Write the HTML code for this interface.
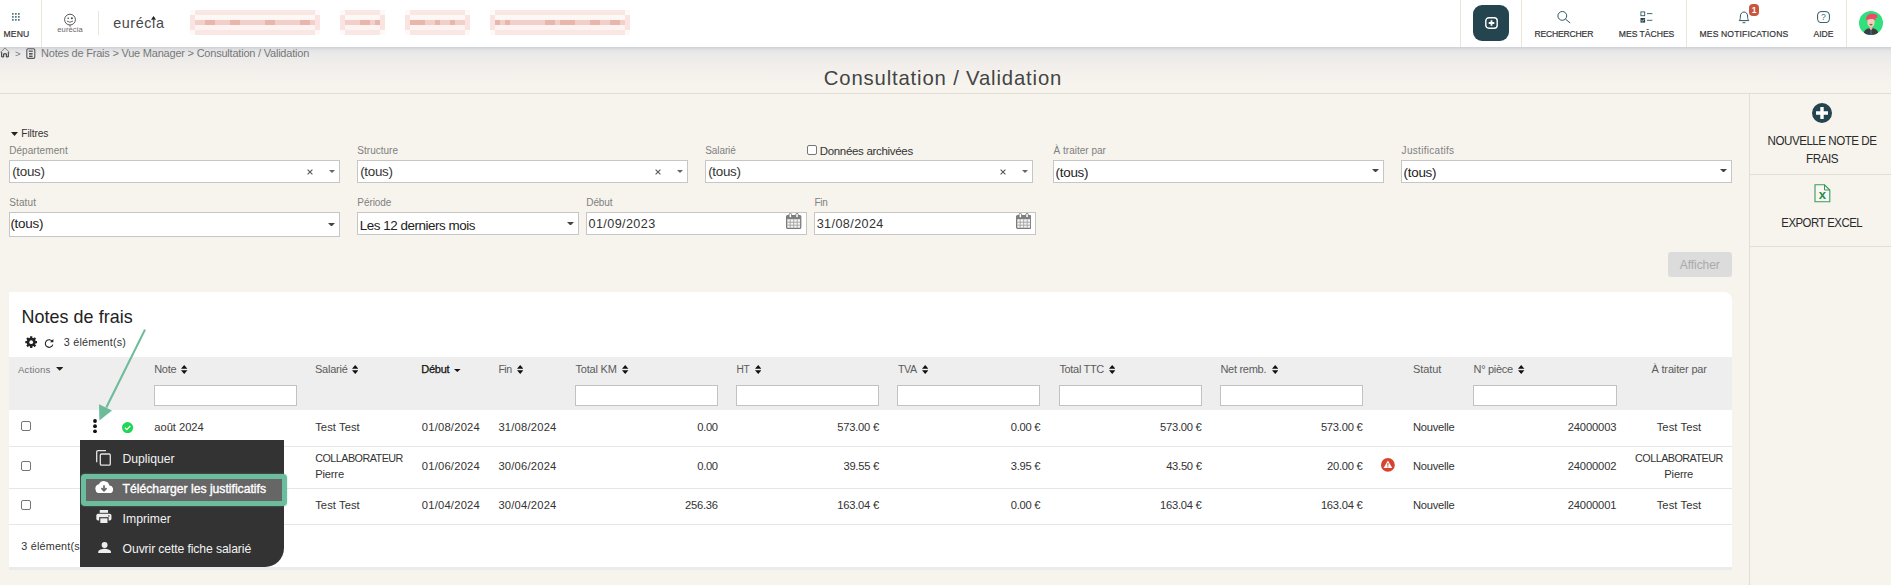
<!DOCTYPE html>
<html lang="fr">
<head>
<meta charset="utf-8">
<title>Consultation / Validation</title>
<style>
*{box-sizing:border-box;margin:0;padding:0}
html,body{width:1891px;height:585px;overflow:hidden}
body{background:#f7f4ee;font-family:"Liberation Sans",sans-serif;color:#333;position:relative}
.t{position:absolute;white-space:nowrap}
.b{position:absolute;display:block}
</style>
</head>
<body>
<div id="bg">
<div class="b " style="left:0.00px;top:47.00px;width:1891.00px;height:40.00px;background:linear-gradient(to bottom,#cdd0d5 0px,#dcdde0 2px,#e6e6e7 4px,#ecebea 9px,#f1eeeb 19px,#f5f2ed 28px,#f7f4ee 38px);"></div>
<div class="b " style="left:0.00px;top:93.00px;width:1891.00px;height:1.00px;background:#e2ded6;"></div>
<div class="b " style="left:1749.00px;top:93.00px;width:1.00px;height:492.00px;background:#e2ded6;"></div>
<div class="b " style="left:1750.00px;top:174.00px;width:141.00px;height:1.00px;background:#e2ded6;"></div>
<div class="b " style="left:1750.00px;top:246.00px;width:141.00px;height:1.00px;background:#e2ded6;"></div>
</div>
<header id="topbar">
<div class="b " style="left:0.00px;top:0.00px;width:1891.00px;height:47.00px;background:#fff;"></div>
<div class="b " style="left:41.00px;top:0.00px;width:1.00px;height:47.00px;background:#ebe5d9;"></div>
<div class="b " style="left:98.00px;top:11.00px;width:1.00px;height:24.00px;background:#ebe5d9;"></div>
<div class="b " style="left:1460.00px;top:0.00px;width:1.00px;height:47.00px;background:#ebe5d9;"></div>
<div class="b " style="left:1521.00px;top:0.00px;width:1.00px;height:47.00px;background:#ebe5d9;"></div>
<div class="b " style="left:1686.00px;top:0.00px;width:1.00px;height:47.00px;background:#ebe5d9;"></div>
<div class="b " style="left:1846.00px;top:0.00px;width:1.00px;height:47.00px;background:#ebe5d9;"></div>
<svg class="b" style="left:12.30px;top:13.00px;" width="8.00" height="8.00" viewBox="0 0 8 8"><rect x="0" y="0" width="1.7" height="1.7" rx=".4" fill="#3f6a75"/><rect x="0" y="3" width="1.7" height="1.7" rx=".4" fill="#3f6a75"/><rect x="0" y="6" width="1.7" height="1.7" rx=".4" fill="#3f6a75"/><rect x="3" y="0" width="1.7" height="1.7" rx=".4" fill="#3f6a75"/><rect x="3" y="3" width="1.7" height="1.7" rx=".4" fill="#3f6a75"/><rect x="3" y="6" width="1.7" height="1.7" rx=".4" fill="#3f6a75"/><rect x="6" y="0" width="1.7" height="1.7" rx=".4" fill="#3f6a75"/><rect x="6" y="3" width="1.7" height="1.7" rx=".4" fill="#3f6a75"/><rect x="6" y="6" width="1.7" height="1.7" rx=".4" fill="#3f6a75"/></svg>
<div class="t" style="left:3.60px;top:27.00px;font-size:8.60px;line-height:14px;color:#333;letter-spacing:0.091px;-webkit-text-stroke:.2px #3a3a3a;">MENU</div>
<svg class="b" style="left:63.00px;top:13.00px;" width="14.00" height="14.00" viewBox="0 0 14 14"><circle cx="7" cy="6.6" r="5.4" fill="none" stroke="#444" stroke-width=".9"/><circle cx="5.2" cy="5.3" r=".8" fill="#444"/><circle cx="8.9" cy="5.3" r="1" fill="#444"/><path d="M4 8 Q7 10.6 10 8" fill="none" stroke="#444" stroke-width=".8"/><path d="M7 12 v2" stroke="#444" stroke-width=".7"/></svg>
<div class="t" style="left:57.20px;top:23.00px;font-size:7.60px;line-height:13px;color:#666;letter-spacing:0.122px;">eurécia</div>
<div class="t" style="left:113.20px;top:13.00px;font-size:14.40px;line-height:20px;color:#484848;letter-spacing:0.583px;">euréc<span style="position:relative">i<svg style="position:absolute;left:-0.8px;top:1.2px" width="5" height="3.8" viewBox="0 0 5 3.8"><path d="M2.5 0L5 3.8L0 3.8Z" fill="#222"/></svg></span>a</div>
<div class="b " style="left:190.00px;top:10.00px;width:130.00px;height:5.00px;background:#f9e7e4;"></div>
<div class="b " style="left:190.00px;top:15.00px;width:130.00px;height:5.00px;background:#fdf6f5;"></div>
<div class="b " style="left:190.00px;top:20.00px;width:130.00px;height:5.00px;background:#f2cfc8;"></div>
<div class="b " style="left:190.00px;top:25.00px;width:130.00px;height:5.00px;background:#fbefed;"></div>
<div class="b " style="left:190.00px;top:30.00px;width:130.00px;height:5.00px;background:#f9e7e4;"></div>
<div class="b " style="left:205.00px;top:20.00px;width:5.00px;height:5.00px;background:#eab5ab;"></div>
<div class="b " style="left:210.00px;top:20.00px;width:5.00px;height:5.00px;background:#eab5ab;"></div>
<div class="b " style="left:230.00px;top:20.00px;width:5.00px;height:5.00px;background:#eab5ab;"></div>
<div class="b " style="left:235.00px;top:20.00px;width:5.00px;height:5.00px;background:#eab5ab;"></div>
<div class="b " style="left:265.00px;top:20.00px;width:5.00px;height:5.00px;background:#eab5ab;"></div>
<div class="b " style="left:270.00px;top:20.00px;width:5.00px;height:5.00px;background:#eab5ab;"></div>
<div class="b " style="left:300.00px;top:20.00px;width:5.00px;height:5.00px;background:#eab5ab;"></div>
<div class="b " style="left:305.00px;top:20.00px;width:5.00px;height:5.00px;background:#eab5ab;"></div>
<div class="b " style="left:190.00px;top:10.00px;width:5.00px;height:5.00px;background:#fef9f8;"></div>
<div class="b " style="left:315.00px;top:10.00px;width:5.00px;height:5.00px;background:#fef9f8;"></div>
<div class="b " style="left:190.00px;top:30.00px;width:5.00px;height:5.00px;background:#fef9f8;"></div>
<div class="b " style="left:315.00px;top:30.00px;width:5.00px;height:5.00px;background:#fef9f8;"></div>
<div class="b " style="left:190.00px;top:15.00px;width:5.00px;height:15.00px;background:#f9e4e1;"></div>
<div class="b " style="left:315.00px;top:15.00px;width:5.00px;height:15.00px;background:#f9e4e1;"></div>
<div class="b " style="left:195.00px;top:15.00px;width:120.00px;height:5.00px;background:#fdf7f6;"></div>
<div class="b " style="left:195.00px;top:25.00px;width:120.00px;height:5.00px;background:#fcf3f2;"></div>
<div class="b " style="left:340.00px;top:10.00px;width:45.00px;height:5.00px;background:#f9e7e4;"></div>
<div class="b " style="left:340.00px;top:15.00px;width:45.00px;height:5.00px;background:#fdf6f5;"></div>
<div class="b " style="left:340.00px;top:20.00px;width:45.00px;height:5.00px;background:#f2cfc8;"></div>
<div class="b " style="left:340.00px;top:25.00px;width:45.00px;height:5.00px;background:#fbefed;"></div>
<div class="b " style="left:340.00px;top:30.00px;width:45.00px;height:5.00px;background:#f9e7e4;"></div>
<div class="b " style="left:360.00px;top:20.00px;width:5.00px;height:5.00px;background:#eab5ab;"></div>
<div class="b " style="left:365.00px;top:20.00px;width:5.00px;height:5.00px;background:#eab5ab;"></div>
<div class="b " style="left:375.00px;top:20.00px;width:5.00px;height:5.00px;background:#eab5ab;"></div>
<div class="b " style="left:340.00px;top:10.00px;width:5.00px;height:5.00px;background:#fef9f8;"></div>
<div class="b " style="left:380.00px;top:10.00px;width:5.00px;height:5.00px;background:#fef9f8;"></div>
<div class="b " style="left:340.00px;top:30.00px;width:5.00px;height:5.00px;background:#fef9f8;"></div>
<div class="b " style="left:380.00px;top:30.00px;width:5.00px;height:5.00px;background:#fef9f8;"></div>
<div class="b " style="left:340.00px;top:15.00px;width:5.00px;height:15.00px;background:#f9e4e1;"></div>
<div class="b " style="left:380.00px;top:15.00px;width:5.00px;height:15.00px;background:#f9e4e1;"></div>
<div class="b " style="left:345.00px;top:15.00px;width:35.00px;height:5.00px;background:#fdf7f6;"></div>
<div class="b " style="left:345.00px;top:25.00px;width:35.00px;height:5.00px;background:#fcf3f2;"></div>
<div class="b " style="left:405.00px;top:10.00px;width:65.00px;height:5.00px;background:#f9e7e4;"></div>
<div class="b " style="left:405.00px;top:15.00px;width:65.00px;height:5.00px;background:#fdf6f5;"></div>
<div class="b " style="left:405.00px;top:20.00px;width:65.00px;height:5.00px;background:#f2cfc8;"></div>
<div class="b " style="left:405.00px;top:25.00px;width:65.00px;height:5.00px;background:#fbefed;"></div>
<div class="b " style="left:405.00px;top:30.00px;width:65.00px;height:5.00px;background:#f9e7e4;"></div>
<div class="b " style="left:410.00px;top:20.00px;width:5.00px;height:5.00px;background:#eab5ab;"></div>
<div class="b " style="left:415.00px;top:20.00px;width:5.00px;height:5.00px;background:#eab5ab;"></div>
<div class="b " style="left:420.00px;top:20.00px;width:5.00px;height:5.00px;background:#eab5ab;"></div>
<div class="b " style="left:435.00px;top:20.00px;width:5.00px;height:5.00px;background:#eab5ab;"></div>
<div class="b " style="left:450.00px;top:20.00px;width:5.00px;height:5.00px;background:#eab5ab;"></div>
<div class="b " style="left:405.00px;top:10.00px;width:5.00px;height:5.00px;background:#fef9f8;"></div>
<div class="b " style="left:465.00px;top:10.00px;width:5.00px;height:5.00px;background:#fef9f8;"></div>
<div class="b " style="left:405.00px;top:30.00px;width:5.00px;height:5.00px;background:#fef9f8;"></div>
<div class="b " style="left:465.00px;top:30.00px;width:5.00px;height:5.00px;background:#fef9f8;"></div>
<div class="b " style="left:405.00px;top:15.00px;width:5.00px;height:15.00px;background:#f9e4e1;"></div>
<div class="b " style="left:465.00px;top:15.00px;width:5.00px;height:15.00px;background:#f9e4e1;"></div>
<div class="b " style="left:410.00px;top:15.00px;width:55.00px;height:5.00px;background:#fdf7f6;"></div>
<div class="b " style="left:410.00px;top:25.00px;width:55.00px;height:5.00px;background:#fcf3f2;"></div>
<div class="b " style="left:490.00px;top:10.00px;width:140.00px;height:5.00px;background:#f9e7e4;"></div>
<div class="b " style="left:490.00px;top:15.00px;width:140.00px;height:5.00px;background:#fdf6f5;"></div>
<div class="b " style="left:490.00px;top:20.00px;width:140.00px;height:5.00px;background:#f2cfc8;"></div>
<div class="b " style="left:490.00px;top:25.00px;width:140.00px;height:5.00px;background:#fbefed;"></div>
<div class="b " style="left:490.00px;top:30.00px;width:140.00px;height:5.00px;background:#f9e7e4;"></div>
<div class="b " style="left:490.00px;top:20.00px;width:5.00px;height:5.00px;background:#eab5ab;"></div>
<div class="b " style="left:495.00px;top:20.00px;width:5.00px;height:5.00px;background:#eab5ab;"></div>
<div class="b " style="left:505.00px;top:20.00px;width:5.00px;height:5.00px;background:#eab5ab;"></div>
<div class="b " style="left:545.00px;top:20.00px;width:5.00px;height:5.00px;background:#eab5ab;"></div>
<div class="b " style="left:550.00px;top:20.00px;width:5.00px;height:5.00px;background:#eab5ab;"></div>
<div class="b " style="left:560.00px;top:20.00px;width:5.00px;height:5.00px;background:#eab5ab;"></div>
<div class="b " style="left:565.00px;top:20.00px;width:5.00px;height:5.00px;background:#eab5ab;"></div>
<div class="b " style="left:570.00px;top:20.00px;width:5.00px;height:5.00px;background:#eab5ab;"></div>
<div class="b " style="left:590.00px;top:20.00px;width:5.00px;height:5.00px;background:#eab5ab;"></div>
<div class="b " style="left:595.00px;top:20.00px;width:5.00px;height:5.00px;background:#eab5ab;"></div>
<div class="b " style="left:610.00px;top:20.00px;width:5.00px;height:5.00px;background:#eab5ab;"></div>
<div class="b " style="left:615.00px;top:20.00px;width:5.00px;height:5.00px;background:#eab5ab;"></div>
<div class="b " style="left:490.00px;top:10.00px;width:5.00px;height:5.00px;background:#fef9f8;"></div>
<div class="b " style="left:625.00px;top:10.00px;width:5.00px;height:5.00px;background:#fef9f8;"></div>
<div class="b " style="left:490.00px;top:30.00px;width:5.00px;height:5.00px;background:#fef9f8;"></div>
<div class="b " style="left:625.00px;top:30.00px;width:5.00px;height:5.00px;background:#fef9f8;"></div>
<div class="b " style="left:490.00px;top:15.00px;width:5.00px;height:15.00px;background:#f9e4e1;"></div>
<div class="b " style="left:625.00px;top:15.00px;width:5.00px;height:15.00px;background:#f9e4e1;"></div>
<div class="b " style="left:495.00px;top:15.00px;width:130.00px;height:5.00px;background:#fdf7f6;"></div>
<div class="b " style="left:495.00px;top:25.00px;width:130.00px;height:5.00px;background:#fcf3f2;"></div>
<div class="b " style="left:1473.00px;top:5.00px;width:36.00px;height:36.00px;background:#24454f;border-radius:9px;"></div>
<svg class="b" style="left:1485.00px;top:17.30px;" width="13.00" height="12.00" viewBox="0 0 13 12"><rect x=".8" y=".8" width="11.4" height="10.4" rx="3" fill="none" stroke="#fff" stroke-width="1.4"/><path d="M6.5 3.2v5.6M3.7 6h5.6" stroke="#fff" stroke-width="1.8"/></svg>
<svg class="b" style="left:1556.00px;top:10.00px;" width="16.00" height="15.00" viewBox="0 0 16 15"><circle cx="6.3" cy="5.9" r="4.4" fill="none" stroke="#2d5862" stroke-width="1"/><path d="M9.5 9.2 L14.2 13" stroke="#2d5862" stroke-width="1"/></svg>
<div class="t" style="left:1534.40px;top:27.00px;font-size:8.60px;line-height:14px;color:#333;letter-spacing:-0.186px;-webkit-text-stroke:.2px #3a3a3a;">RECHERCHER</div>
<svg class="b" style="left:1640.00px;top:11.00px;" width="13.00" height="12.00" viewBox="0 0 13 12"><rect x=".9" y=".9" width="3.8" height="3.8" fill="none" stroke="#2d5862" stroke-width=".9"/><rect x=".5" y="7" width="4.6" height="4.6" fill="#24454f"/><path d="M1.5 9.3l1 1 1.6-2" stroke="#fff" stroke-width=".8" fill="none"/><path d="M7 2.6h5.4M7 9.3h5.4" stroke="#2d5862" stroke-width=".9"/></svg>
<div class="t" style="left:1618.80px;top:27.00px;font-size:8.60px;line-height:14px;color:#333;letter-spacing:-0.019px;-webkit-text-stroke:.2px #3a3a3a;">MES TÂCHES</div>
<svg class="b" style="left:1738.00px;top:10.50px;" width="12.00" height="13.00" viewBox="0 0 12 13"><path d="M1.2 9.6 C2.4 8.6 2.3 6.6 2.4 5 C2.5 2.6 4 1 6 1 C8 1 9.5 2.6 9.6 5 C9.7 6.6 9.6 8.6 10.8 9.6 Z" fill="none" stroke="#2d5862" stroke-width="1"/><path d="M4.6 11.7h2.8" stroke="#2d5862" stroke-width="1"/></svg>
<div class="b " style="left:1749.00px;top:4.20px;width:10.00px;height:11.40px;background:#c8553d;border-radius:4px;"></div>
<div class="t" style="left:1751.64px;top:3.00px;font-size:8.50px;line-height:14px;color:#fff;font-weight:bold;">1</div>
<div class="t" style="left:1699.50px;top:27.00px;font-size:8.60px;line-height:14px;color:#333;letter-spacing:0.124px;-webkit-text-stroke:.2px #3a3a3a;">MES NOTIFICATIONS</div>
<svg class="b" style="left:1817.00px;top:10.80px;" width="13.00" height="12.20" viewBox="0 0 13 12.2"><rect x=".6" y=".6" width="11.8" height="11" rx="3.4" fill="none" stroke="#2d5862" stroke-width="1"/></svg>
<div class="t" style="left:1821.11px;top:10.00px;font-size:8.60px;line-height:14px;color:#45707a;">?</div>
<div class="t" style="left:1813.60px;top:27.00px;font-size:8.60px;line-height:14px;color:#333;letter-spacing:-0.060px;-webkit-text-stroke:.2px #3a3a3a;">AIDE</div>
<svg class="b" style="left:1859.00px;top:11.00px;" width="24.00" height="24.00" viewBox="0 0 24 24"><defs><clipPath id="av"><circle cx="12" cy="12" r="12"/></clipPath></defs><circle cx="12" cy="12" r="12" fill="#2fe07c"/><g clip-path="url(#av)"><path d="M4.5 24 C4.8 18.8 7.5 17.3 12 17.3 C16.5 17.3 19.2 18.8 19.5 24 Z" fill="#3d3d40"/><path d="M10.7 14.6h2.6v3.2l-1.3 1.6-1.3-1.6z" fill="#e9bda6"/><path d="M8.4 6.5 h7.2 v5.6 c0 2.4 -1.7 4 -3.6 4 s-3.6 -1.6 -3.6 -4z" fill="#f2cdb8"/><path d="M7.4 9.8 C6.4 4.6 9.5 2.6 13 2.8 C16.6 2.8 19.4 4.4 18.3 6.4 L16.6 6.9 L16.2 9.8 C15.6 8.2 13.6 7.8 11.6 8 C9.8 8.1 8.4 8.6 7.4 9.8Z" fill="#f04868"/><path d="M10.3 13.2 C11 14.8 13 14.8 13.7 13.2 C13.2 12.5 10.8 12.5 10.3 13.2Z" fill="#7a665c"/><rect x="11.4" y="19.6" width="1.3" height="4.4" fill="#2b6fb0"/></g></svg>
</header>
<nav id="breadcrumb">
<svg class="b" style="left:0.00px;top:47.40px;" width="10.00" height="11.00" viewBox="0 0 10 11"><path d="M.5 5.4 L5 .9 L9.5 5.4" fill="none" stroke="#777" stroke-width=".9"/><path d="M1.7 5.2 V9.9 H3.7 V6.8 H6.3 V9.9 H8.3 V5.2" fill="none" stroke="#2a2a2a" stroke-width="1"/></svg>
<div class="t" style="left:14.90px;top:46.00px;font-size:9.60px;line-height:15px;color:#777;">&gt;</div>
<svg class="b" style="left:25.50px;top:47.50px;" width="10.00" height="11.00" viewBox="0 0 10 11"><rect x=".8" y=".8" width="8" height="9.6" rx="1.3" fill="none" stroke="#555" stroke-width="1.1"/><path d="M2.8 3.2h4" stroke="#555" stroke-width="1.3"/><rect x="3" y="5" width="3.6" height="1.6" fill="#555"/><rect x="3" y="7.6" width="3.6" height="1.4" fill="#555"/></svg>
<div class="t" style="left:41.10px;top:45.00px;font-size:11.00px;line-height:16px;color:#777;letter-spacing:-0.216px;">Notes de Frais &gt; Vue Manager &gt; Consultation / Validation</div>
<div class="t" style="left:823.80px;top:65.00px;font-size:20.30px;line-height:26px;color:#444;letter-spacing:0.845px;">Consultation / Validation</div>
</nav>
<aside id="actions">
<svg class="b" style="left:1811.60px;top:103.00px;" width="20.00" height="20.00" viewBox="0 0 20 20"><circle cx="10" cy="10" r="10" fill="#24454f"/><path d="M10 4v12M4 10h12" stroke="#fff" stroke-width="3.4"/></svg>
<div class="t" style="left:1767.60px;top:133.00px;font-size:11.60px;line-height:16px;color:#2a2a2a;letter-spacing:-0.486px;transform:scaleY(1.069);transform-origin:0 12px;">NOUVELLE NOTE DE</div>
<div class="t" style="left:1806.05px;top:150.00px;font-size:11.70px;line-height:17px;color:#2a2a2a;letter-spacing:-0.489px;transform:scaleY(1.060);transform-origin:0 13px;">FRAIS</div>
<svg class="b" style="left:1814.00px;top:184.00px;" width="17.00" height="18.50" viewBox="0 0 17 18.5"><path d="M1 .8 H10.5 L15.8 6 V17.7 H1 Z" fill="#f9f7f2" stroke="#3a9a5c" stroke-width="1.1"/><path d="M10.5 .8 V6 H15.8" fill="none" stroke="#3a9a5c" stroke-width="1"/></svg>
<div class="t" style="left:1818.69px;top:185.00px;font-size:13.00px;line-height:19px;color:#2e8b50;font-weight:bold;font-family:"Liberation Serif",serif;">x</div>
<div class="t" style="left:1781.35px;top:215.00px;font-size:11.40px;line-height:16px;color:#2a2a2a;letter-spacing:-0.522px;transform:scaleY(1.088);transform-origin:0 12px;">EXPORT EXCEL</div>
</aside>
<section id="filters">
<svg class="b" style="left:10.50px;top:131.50px;" width="7.00" height="4.00" viewBox="0 0 7 4"><path d="M0 0H7L3.5 4Z" fill="#222"/></svg>
<div class="t" style="left:21.30px;top:126.00px;font-size:10.20px;line-height:15px;color:#333;letter-spacing:-0.124px;">Filtres</div>
<div class="t" style="left:9.20px;top:143.00px;font-size:10.00px;line-height:15px;color:#808080;letter-spacing:0.070px;">Département</div>
<div class="t" style="left:357.30px;top:143.00px;font-size:10.00px;line-height:15px;color:#808080;letter-spacing:0.019px;">Structure</div>
<div class="t" style="left:705.30px;top:143.00px;font-size:10.00px;line-height:15px;color:#808080;letter-spacing:-0.108px;">Salarié</div>
<div class="t" style="left:1053.60px;top:143.00px;font-size:10.00px;line-height:15px;color:#808080;">À traiter par</div>
<div class="t" style="left:1401.60px;top:143.00px;font-size:10.00px;line-height:15px;color:#808080;letter-spacing:0.300px;">Justificatifs</div>
<div class="t" style="left:9.20px;top:195.00px;font-size:10.00px;line-height:15px;color:#808080;letter-spacing:0.130px;">Statut</div>
<div class="t" style="left:357.30px;top:195.00px;font-size:10.00px;line-height:15px;color:#808080;letter-spacing:-0.075px;">Période</div>
<div class="t" style="left:586.30px;top:195.00px;font-size:10.00px;line-height:15px;color:#808080;letter-spacing:-0.125px;">Début</div>
<div class="t" style="left:814.60px;top:195.00px;font-size:10.00px;line-height:15px;color:#808080;letter-spacing:-0.350px;">Fin</div>
<div class="b " style="left:9.00px;top:160.00px;width:331.00px;height:23.00px;background:#fff;border:1px solid #c6c6c6;"></div>
<div class="t" style="left:12.20px;top:162.00px;font-size:13.40px;line-height:19px;color:#333;letter-spacing:-0.287px;">(tous)</div>
<svg class="b" style="left:307.30px;top:168.80px;" width="6.00" height="6.00" viewBox="0 0 6 6"><path d="M.6 .6L5.4 5.4M5.4 .6L.6 5.4" stroke="#555" stroke-width="1.1"/></svg>
<svg class="b" style="left:328.70px;top:170.10px;" width="6.00" height="3.00" viewBox="0 0 6 3"><path d="M0 0H6L3 3Z" fill="#666"/></svg>
<div class="b " style="left:357.00px;top:160.00px;width:331.00px;height:23.00px;background:#fff;border:1px solid #c6c6c6;"></div>
<div class="t" style="left:360.20px;top:162.00px;font-size:13.40px;line-height:19px;color:#333;letter-spacing:-0.287px;">(tous)</div>
<svg class="b" style="left:655.30px;top:168.80px;" width="6.00" height="6.00" viewBox="0 0 6 6"><path d="M.6 .6L5.4 5.4M5.4 .6L.6 5.4" stroke="#555" stroke-width="1.1"/></svg>
<svg class="b" style="left:676.70px;top:170.10px;" width="6.00" height="3.00" viewBox="0 0 6 3"><path d="M0 0H6L3 3Z" fill="#666"/></svg>
<div class="b " style="left:705.00px;top:160.00px;width:328.00px;height:23.00px;background:#fff;border:1px solid #c6c6c6;"></div>
<div class="t" style="left:708.20px;top:162.00px;font-size:13.40px;line-height:19px;color:#333;letter-spacing:-0.287px;">(tous)</div>
<svg class="b" style="left:1000.30px;top:168.80px;" width="6.00" height="6.00" viewBox="0 0 6 6"><path d="M.6 .6L5.4 5.4M5.4 .6L.6 5.4" stroke="#555" stroke-width="1.1"/></svg>
<svg class="b" style="left:1021.70px;top:170.10px;" width="6.00" height="3.00" viewBox="0 0 6 3"><path d="M0 0H6L3 3Z" fill="#666"/></svg>
<div class="b " style="left:1053.00px;top:160.00px;width:331.00px;height:23.00px;background:#fff;border:1px solid #c6c6c6;"></div>
<div class="t" style="left:1055.50px;top:163.00px;font-size:13.40px;line-height:19px;color:#222;letter-spacing:-0.247px;">(tous)</div>
<svg class="b" style="left:1372.30px;top:168.70px;" width="7.00" height="3.60" viewBox="0 0 7 3.6"><path d="M0 0H7L3.5 3.6Z" fill="#444"/></svg>
<div class="b " style="left:1401.00px;top:160.00px;width:331.00px;height:23.00px;background:#fff;border:1px solid #c6c6c6;"></div>
<div class="t" style="left:1403.50px;top:163.00px;font-size:13.40px;line-height:19px;color:#222;letter-spacing:-0.247px;">(tous)</div>
<svg class="b" style="left:1720.30px;top:168.70px;" width="7.00" height="3.60" viewBox="0 0 7 3.6"><path d="M0 0H7L3.5 3.6Z" fill="#444"/></svg>
<div class="b " style="left:9.00px;top:212.00px;width:331.00px;height:25.00px;background:#fff;border:1px solid #c6c6c6;"></div>
<div class="t" style="left:10.40px;top:214.00px;font-size:13.40px;line-height:19px;color:#222;letter-spacing:-0.247px;">(tous)</div>
<svg class="b" style="left:328.30px;top:222.80px;" width="7.00" height="3.60" viewBox="0 0 7 3.6"><path d="M0 0H7L3.5 3.6Z" fill="#444"/></svg>
<div class="b " style="left:357.00px;top:212.00px;width:222.00px;height:23.00px;background:#fff;border:1px solid #c6c6c6;"></div>
<div class="t" style="left:359.70px;top:216.00px;font-size:13.40px;line-height:19px;color:#222;letter-spacing:-0.454px;">Les 12 derniers mois</div>
<svg class="b" style="left:567.30px;top:221.50px;" width="7.00" height="3.60" viewBox="0 0 7 3.6"><path d="M0 0H7L3.5 3.6Z" fill="#444"/></svg>
<div class="b " style="left:586.00px;top:212.00px;width:221.00px;height:23.00px;background:#fff;border:1px solid #c6c6c6;"></div>
<div class="t" style="left:588.50px;top:215.00px;font-size:12.60px;line-height:18px;color:#333;letter-spacing:0.404px;">01/09/2023</div>
<div class="b " style="left:814.00px;top:212.00px;width:222.00px;height:23.00px;background:#fff;border:1px solid #c6c6c6;"></div>
<div class="t" style="left:816.70px;top:215.00px;font-size:12.60px;line-height:18px;color:#333;letter-spacing:0.404px;">31/08/2024</div>
<svg class="b" style="left:786.40px;top:213.00px;" width="15.40" height="16.00" viewBox="0 0 15.4 16"><rect x=".65" y="2.6" width="14.1" height="12.75" rx="1.2" fill="#f4f4f4" stroke="#7a7a7a" stroke-width="1.3"/><rect x=".65" y="2.6" width="14.1" height="3.6" fill="#808080"/><path d="M4.2 6.2V15M7.7 6.2V15M11.2 6.2V15M1.3 9.2H14.1M1.3 12.2H14.1" stroke="#a2a2a2" stroke-width=".9"/><rect x="3.1" y=".4" width="2.5" height="4.4" rx="1.2" fill="#fff" stroke="#6a6a6a" stroke-width=".8"/><rect x="9.8" y=".4" width="2.5" height="4.4" rx="1.2" fill="#fff" stroke="#6a6a6a" stroke-width=".8"/></svg>
<svg class="b" style="left:1015.60px;top:213.00px;" width="15.40" height="16.00" viewBox="0 0 15.4 16"><rect x=".65" y="2.6" width="14.1" height="12.75" rx="1.2" fill="#f4f4f4" stroke="#7a7a7a" stroke-width="1.3"/><rect x=".65" y="2.6" width="14.1" height="3.6" fill="#808080"/><path d="M4.2 6.2V15M7.7 6.2V15M11.2 6.2V15M1.3 9.2H14.1M1.3 12.2H14.1" stroke="#a2a2a2" stroke-width=".9"/><rect x="3.1" y=".4" width="2.5" height="4.4" rx="1.2" fill="#fff" stroke="#6a6a6a" stroke-width=".8"/><rect x="9.8" y=".4" width="2.5" height="4.4" rx="1.2" fill="#fff" stroke="#6a6a6a" stroke-width=".8"/></svg>
<div class="b " style="left:807.00px;top:145.30px;width:10.00px;height:10.00px;background:#fff;border:1px solid #767676;border-radius:2px;"></div>
<div class="t" style="left:819.70px;top:143.00px;font-size:11.50px;line-height:16px;color:#333;letter-spacing:-0.309px;">Données archivées</div>
<div class="b " style="left:1668.00px;top:252.00px;width:64.00px;height:25.00px;background:#dcdcdc;border-radius:3px;"></div>
<div class="t" style="left:1679.80px;top:256.00px;font-size:12.00px;line-height:18px;color:#aaa;letter-spacing:-0.063px;">Afficher</div>
</section>
<section id="notes">
<div class="b " style="left:9.00px;top:292.00px;width:1723.00px;height:275.00px;background:#fff;border-radius:0 8px 0 0;"></div>
<div class="b " style="left:9.00px;top:567.00px;width:1723.00px;height:3.00px;background:#ebebeb;"></div>
<div class="t" style="left:21.40px;top:305.00px;font-size:17.90px;line-height:24px;color:#222;letter-spacing:0.074px;">Notes de frais</div>
<svg class="b" style="left:24.60px;top:336.20px;" width="12.40" height="12.40" viewBox="0 0 12.4 12.4"><path d="M12.09 5.07L12.09 7.33L10.62 7.33L10.12 8.52L11.17 9.57L9.57 11.17L8.53 10.12L7.33 10.62L7.33 12.09L5.07 12.09L5.07 10.62L3.88 10.12L2.83 11.17L1.23 9.57L2.28 8.53L1.78 7.33L0.31 7.33L0.31 5.07L1.78 5.07L2.28 3.88L1.23 2.83L2.83 1.23L3.87 2.28L5.07 1.78L5.07 0.31L7.33 0.31L7.33 1.78L8.52 2.28L9.57 1.23L11.17 2.83L10.12 3.87L10.62 5.07Z" fill="#222"/><circle cx="6.2" cy="6.2" r="1.86" fill="#fff"/></svg>
<svg class="b" style="left:43.50px;top:338.00px;" width="10.00" height="10.50" viewBox="0 0 10 10.5"><path d="M8.4 3.6 A3.8 3.8 0 1 0 8.8 6.6" fill="none" stroke="#222" stroke-width="1.1"/><path d="M9.4 .9 V4.3 H6 Z" fill="#222"/></svg>
<div class="t" style="left:63.80px;top:334.00px;font-size:10.80px;line-height:16px;color:#333;letter-spacing:0.196px;">3 élément(s)</div>
<div class="b " style="left:9.00px;top:357.00px;width:1723.00px;height:53.00px;background:#eeeeee;"></div>
<div class="t" style="left:18.00px;top:362.00px;font-size:9.70px;line-height:15px;color:#777;letter-spacing:0.097px;">Actions</div>
<svg class="b" style="left:55.50px;top:367.30px;" width="7.40" height="3.80" viewBox="0 0 7.4 3.8"><path d="M0 0H7.4L3.7 3.8Z" fill="#222"/></svg>
<div class="t" style="left:154.20px;top:361.00px;font-size:11.00px;line-height:16px;color:#5c5c5c;letter-spacing:-0.270px;">Note</div>
<svg class="b" style="left:181.20px;top:364.50px;" width="6.40" height="9.00" viewBox="0 0 6.4 9"><path d="M0 3.8L3.2 0L6.4 3.8ZM0 5.2L3.2 9L6.4 5.2Z" fill="#111"/></svg>
<div class="t" style="left:315.00px;top:361.00px;font-size:11.00px;line-height:16px;color:#5c5c5c;letter-spacing:-0.244px;">Salarié</div>
<svg class="b" style="left:352.00px;top:364.50px;" width="6.40" height="9.00" viewBox="0 0 6.4 9"><path d="M0 3.8L3.2 0L6.4 3.8ZM0 5.2L3.2 9L6.4 5.2Z" fill="#111"/></svg>
<div class="t" style="left:421.30px;top:361.00px;font-size:11.00px;line-height:16px;color:#111;letter-spacing:-0.243px;-webkit-text-stroke:.25px #111;">Début</div>
<svg class="b" style="left:454.00px;top:369.40px;" width="6.60" height="3.00" viewBox="0 0 6.6 3"><path d="M0 0H6.6L3.3 3Z" fill="#111"/></svg>
<div class="t" style="left:498.40px;top:361.00px;font-size:10.60px;line-height:16px;color:#5c5c5c;letter-spacing:-0.517px;transform:scaleY(1.038);transform-origin:0 12px;">Fin</div>
<svg class="b" style="left:517.00px;top:364.50px;" width="6.40" height="9.00" viewBox="0 0 6.4 9"><path d="M0 3.8L3.2 0L6.4 3.8ZM0 5.2L3.2 9L6.4 5.2Z" fill="#111"/></svg>
<div class="t" style="left:575.60px;top:361.00px;font-size:11.00px;line-height:16px;color:#5c5c5c;letter-spacing:-0.227px;">Total KM</div>
<svg class="b" style="left:622.20px;top:364.50px;" width="6.40" height="9.00" viewBox="0 0 6.4 9"><path d="M0 3.8L3.2 0L6.4 3.8ZM0 5.2L3.2 9L6.4 5.2Z" fill="#111"/></svg>
<div class="t" style="left:736.50px;top:362.00px;font-size:10.20px;line-height:15px;color:#5c5c5c;letter-spacing:-0.417px;transform:scaleY(1.078);transform-origin:0 11px;">HT</div>
<svg class="b" style="left:754.80px;top:364.50px;" width="6.40" height="9.00" viewBox="0 0 6.4 9"><path d="M0 3.8L3.2 0L6.4 3.8ZM0 5.2L3.2 9L6.4 5.2Z" fill="#111"/></svg>
<div class="t" style="left:898.10px;top:361.00px;font-size:10.70px;line-height:16px;color:#5c5c5c;letter-spacing:-0.531px;transform:scaleY(1.028);transform-origin:0 12px;">TVA</div>
<svg class="b" style="left:922.00px;top:364.50px;" width="6.40" height="9.00" viewBox="0 0 6.4 9"><path d="M0 3.8L3.2 0L6.4 3.8ZM0 5.2L3.2 9L6.4 5.2Z" fill="#111"/></svg>
<div class="t" style="left:1059.40px;top:361.00px;font-size:11.00px;line-height:16px;color:#5c5c5c;letter-spacing:-0.321px;">Total TTC</div>
<svg class="b" style="left:1109.00px;top:364.50px;" width="6.40" height="9.00" viewBox="0 0 6.4 9"><path d="M0 3.8L3.2 0L6.4 3.8ZM0 5.2L3.2 9L6.4 5.2Z" fill="#111"/></svg>
<div class="t" style="left:1220.40px;top:361.00px;font-size:11.00px;line-height:16px;color:#5c5c5c;letter-spacing:-0.274px;">Net remb.</div>
<svg class="b" style="left:1271.90px;top:364.50px;" width="6.40" height="9.00" viewBox="0 0 6.4 9"><path d="M0 3.8L3.2 0L6.4 3.8ZM0 5.2L3.2 9L6.4 5.2Z" fill="#111"/></svg>
<div class="t" style="left:1412.90px;top:361.00px;font-size:11.00px;line-height:16px;color:#5c5c5c;letter-spacing:-0.073px;">Statut</div>
<div class="t" style="left:1473.60px;top:361.00px;font-size:11.00px;line-height:16px;color:#5c5c5c;letter-spacing:-0.313px;">N° pièce</div>
<svg class="b" style="left:1518.20px;top:364.50px;" width="6.40" height="9.00" viewBox="0 0 6.4 9"><path d="M0 3.8L3.2 0L6.4 3.8ZM0 5.2L3.2 9L6.4 5.2Z" fill="#111"/></svg>
<div class="t" style="left:1651.40px;top:361.00px;font-size:11.00px;line-height:16px;color:#5c5c5c;letter-spacing:-0.156px;">À traiter par</div>
<div class="b " style="left:154.00px;top:385.00px;width:143.00px;height:21.00px;background:#fff;border:1px solid #c2c2c2;"></div>
<div class="b " style="left:575.00px;top:385.00px;width:143.00px;height:21.00px;background:#fff;border:1px solid #c2c2c2;"></div>
<div class="b " style="left:736.00px;top:385.00px;width:143.00px;height:21.00px;background:#fff;border:1px solid #c2c2c2;"></div>
<div class="b " style="left:897.00px;top:385.00px;width:143.00px;height:21.00px;background:#fff;border:1px solid #c2c2c2;"></div>
<div class="b " style="left:1059.00px;top:385.00px;width:143.00px;height:21.00px;background:#fff;border:1px solid #c2c2c2;"></div>
<div class="b " style="left:1220.00px;top:385.00px;width:143.00px;height:21.00px;background:#fff;border:1px solid #c2c2c2;"></div>
<div class="b " style="left:1473.00px;top:385.00px;width:144.00px;height:21.00px;background:#fff;border:1px solid #c2c2c2;"></div>
<div class="b " style="left:9.00px;top:446.00px;width:1723.00px;height:1.00px;background:#e6e6e6;"></div>
<div class="b " style="left:9.00px;top:488.00px;width:1723.00px;height:1.00px;background:#e6e6e6;"></div>
<div class="b " style="left:9.00px;top:524.00px;width:1723.00px;height:1.00px;background:#e6e6e6;"></div>
<div class="b " style="left:21.30px;top:421.20px;width:10.00px;height:10.00px;background:#fff;border:1px solid #767676;border-radius:2px;"></div>
<div class="b " style="left:21.30px;top:461.30px;width:10.00px;height:10.00px;background:#fff;border:1px solid #767676;border-radius:2px;"></div>
<div class="b " style="left:21.30px;top:500.30px;width:10.00px;height:10.00px;background:#fff;border:1px solid #767676;border-radius:2px;"></div>
<div class="t" style="left:421.80px;top:419.00px;font-size:11.20px;line-height:16px;color:#333;letter-spacing:0.216px;">01/08/2024</div>
<div class="t" style="left:498.40px;top:419.00px;font-size:11.20px;line-height:16px;color:#333;letter-spacing:0.216px;">31/08/2024</div>
<div class="t" style="left:697.31px;top:419.00px;font-size:11.20px;line-height:16px;color:#333;letter-spacing:-0.365px;">0.00</div>
<div class="t" style="left:837.30px;top:419.00px;font-size:11.20px;line-height:16px;color:#333;letter-spacing:-0.246px;">573.00 €</div>
<div class="t" style="left:1010.76px;top:419.00px;font-size:11.20px;line-height:16px;color:#333;letter-spacing:-0.299px;">0.00 €</div>
<div class="t" style="left:1160.00px;top:419.00px;font-size:11.20px;line-height:16px;color:#333;letter-spacing:-0.246px;">573.00 €</div>
<div class="t" style="left:1320.90px;top:419.00px;font-size:11.20px;line-height:16px;color:#333;letter-spacing:-0.246px;">573.00 €</div>
<div class="t" style="left:1412.90px;top:419.00px;font-size:11.20px;line-height:16px;color:#333;letter-spacing:-0.238px;">Nouvelle</div>
<div class="t" style="left:1567.70px;top:419.00px;font-size:11.20px;line-height:16px;color:#333;letter-spacing:-0.149px;">24000003</div>
<div class="t" style="left:421.80px;top:458.00px;font-size:11.20px;line-height:16px;color:#333;letter-spacing:0.216px;">01/06/2024</div>
<div class="t" style="left:498.40px;top:458.00px;font-size:11.20px;line-height:16px;color:#333;letter-spacing:0.216px;">30/06/2024</div>
<div class="t" style="left:697.31px;top:458.00px;font-size:11.20px;line-height:16px;color:#333;letter-spacing:-0.365px;">0.00</div>
<div class="t" style="left:843.43px;top:458.00px;font-size:11.20px;line-height:16px;color:#333;letter-spacing:-0.264px;">39.55 €</div>
<div class="t" style="left:1010.76px;top:458.00px;font-size:11.20px;line-height:16px;color:#333;letter-spacing:-0.299px;">3.95 €</div>
<div class="t" style="left:1166.13px;top:458.00px;font-size:11.20px;line-height:16px;color:#333;letter-spacing:-0.264px;">43.50 €</div>
<div class="t" style="left:1327.03px;top:458.00px;font-size:11.20px;line-height:16px;color:#333;letter-spacing:-0.264px;">20.00 €</div>
<div class="t" style="left:1412.90px;top:458.00px;font-size:11.20px;line-height:16px;color:#333;letter-spacing:-0.238px;">Nouvelle</div>
<div class="t" style="left:1567.70px;top:458.00px;font-size:11.20px;line-height:16px;color:#333;letter-spacing:-0.149px;">24000002</div>
<div class="t" style="left:421.80px;top:497.00px;font-size:11.20px;line-height:16px;color:#333;letter-spacing:0.216px;">01/04/2024</div>
<div class="t" style="left:498.40px;top:497.00px;font-size:11.20px;line-height:16px;color:#333;letter-spacing:0.216px;">30/04/2024</div>
<div class="t" style="left:685.05px;top:497.00px;font-size:11.20px;line-height:16px;color:#333;letter-spacing:-0.264px;">256.36</div>
<div class="t" style="left:837.30px;top:497.00px;font-size:11.20px;line-height:16px;color:#333;letter-spacing:-0.246px;">163.04 €</div>
<div class="t" style="left:1010.76px;top:497.00px;font-size:11.20px;line-height:16px;color:#333;letter-spacing:-0.299px;">0.00 €</div>
<div class="t" style="left:1160.00px;top:497.00px;font-size:11.20px;line-height:16px;color:#333;letter-spacing:-0.246px;">163.04 €</div>
<div class="t" style="left:1320.90px;top:497.00px;font-size:11.20px;line-height:16px;color:#333;letter-spacing:-0.246px;">163.04 €</div>
<div class="t" style="left:1412.90px;top:497.00px;font-size:11.20px;line-height:16px;color:#333;letter-spacing:-0.238px;">Nouvelle</div>
<div class="t" style="left:1567.70px;top:497.00px;font-size:11.20px;line-height:16px;color:#333;letter-spacing:-0.149px;">24000001</div>
<div class="t" style="left:154.30px;top:419.00px;font-size:11.20px;line-height:16px;color:#333;letter-spacing:-0.043px;">août 2024</div>
<div class="t" style="left:315.20px;top:419.00px;font-size:11.20px;line-height:16px;color:#333;letter-spacing:0.073px;">Test Test</div>
<div class="t" style="left:1656.70px;top:419.00px;font-size:11.20px;line-height:16px;color:#333;letter-spacing:0.073px;">Test Test</div>
<div class="t" style="left:315.20px;top:450.00px;font-size:10.80px;line-height:16px;color:#333;letter-spacing:-0.534px;transform:scaleY(1.037);transform-origin:0 12px;">COLLABORATEUR</div>
<div class="t" style="left:315.20px;top:466.00px;font-size:11.20px;line-height:16px;color:#333;letter-spacing:-0.181px;">Pierre</div>
<div class="t" style="left:1635.10px;top:450.00px;font-size:10.80px;line-height:16px;color:#333;letter-spacing:-0.534px;transform:scaleY(1.037);transform-origin:0 12px;">COLLABORATEUR</div>
<div class="t" style="left:1664.30px;top:466.00px;font-size:11.20px;line-height:16px;color:#333;letter-spacing:-0.181px;">Pierre</div>
<div class="t" style="left:315.20px;top:497.00px;font-size:11.20px;line-height:16px;color:#333;letter-spacing:0.073px;">Test Test</div>
<div class="t" style="left:1656.70px;top:497.00px;font-size:11.20px;line-height:16px;color:#333;letter-spacing:0.073px;">Test Test</div>
<div class="t" style="left:21.30px;top:538.00px;font-size:10.80px;line-height:16px;color:#333;letter-spacing:0.196px;">3 élément(s)</div>
<svg class="b" style="left:92.90px;top:418.80px;" width="4.00" height="14.40" viewBox="0 0 4 14.4"><circle cx="2" cy="2" r="1.9" fill="#111"/><circle cx="2" cy="7.15" r="1.9" fill="#111"/><circle cx="2" cy="12.3" r="1.9" fill="#111"/></svg>
<svg class="b" style="left:122.40px;top:421.80px;" width="11.20" height="11.20" viewBox="0 0 11 11"><circle cx="5.5" cy="5.5" r="5.5" fill="#1fd655"/><path d="M2.9 5.7L4.7 7.5L8.1 3.9" fill="none" stroke="#fff" stroke-width="1.3"/></svg>
<svg class="b" style="left:1381.20px;top:458.00px;" width="13.80" height="13.80" viewBox="0 0 13.8 13.8"><circle cx="6.9" cy="6.9" r="6.9" fill="#d8432f"/><path d="M6.9 2.6L11.2 10H2.6Z" fill="#fff"/><path d="M6.9 5V7.8" stroke="#d8432f" stroke-width="1.1"/><circle cx="6.9" cy="8.9" r=".6" fill="#d8432f"/></svg>
<svg class="b" style="left:90.00px;top:325.00px;" width="60.00" height="100.00" viewBox="0 0 60 100"><path d="M55 4.6 L16.3 82.5" stroke="#6dbb9a" stroke-width="2.1" fill="none"/><path d="M9 79.3 L22 85.6 L9.4 95.6 Z" fill="#6dbb9a"/></svg>
</section>
<div id="rowmenu" role="menu">
<div class="b " style="left:80.00px;top:440.00px;width:204.00px;height:127.00px;background:#333333;border-radius:0 0 19px 0;"></div>
<div class="b " style="left:81.00px;top:473.50px;width:206.00px;height:32.50px;background:#666666;border:5px solid #6cbd9e;border-radius:4px;box-shadow:0 0 2px rgba(108,189,158,.6);"></div>
<div class="t" style="left:122.60px;top:450.00px;font-size:12.20px;line-height:18px;color:#f2f2f2;letter-spacing:-0.027px;">Dupliquer</div>
<div class="t" style="left:122.60px;top:480.00px;font-size:12.20px;line-height:18px;color:#fff;letter-spacing:-0.006px;-webkit-text-stroke:.35px #fff;">Télécharger les justificatifs</div>
<div class="t" style="left:122.60px;top:510.00px;font-size:12.20px;line-height:18px;color:#f2f2f2;letter-spacing:0.024px;">Imprimer</div>
<div class="t" style="left:122.60px;top:540.00px;font-size:12.20px;line-height:18px;color:#f2f2f2;letter-spacing:-0.113px;">Ouvrir cette fiche salarié</div>
<svg class="b" style="left:95.60px;top:449.60px;" width="15.20" height="16.00" viewBox="0 0 15.2 16"><path d="M.7 12.3V2.2Q.7 .7 2.2 .7H10" fill="none" stroke="#e4e4e4" stroke-width="1.3"/><rect x="4.3" y="4" width="10" height="11.2" rx="1.2" fill="none" stroke="#e4e4e4" stroke-width="1.3"/></svg>
<svg class="b" style="left:94.70px;top:480.80px;" width="18.00" height="12.30" viewBox="0 0 18 12.5"><path d="M14.5 4.7A5.6 5.6 0 0 0 3.9 3.4A4.6 4.6 0 0 0 4.5 12.5H14.2A3.9 3.9 0 0 0 14.5 4.7Z" fill="#fff"/><path d="M9 4.2V9.6M6.4 7.2L9 9.9L11.6 7.2" fill="none" stroke="#666" stroke-width="1.7"/></svg>
<svg class="b" style="left:96.40px;top:509.80px;" width="15.80" height="13.60" viewBox="0 0 16 14.4"><rect x="3.6" y="0" width="8.8" height="3" fill="#eee"/><rect x="0" y="4" width="16" height="7" rx="1.8" fill="#eee"/><rect x="3.6" y="8.2" width="8.8" height="6.2" fill="#eee" stroke="#333" stroke-width="1.2"/><circle cx="13.3" cy="6.3" r=".8" fill="#333"/></svg>
<svg class="b" style="left:98.00px;top:541.70px;" width="13.20" height="11.40" viewBox="0 0 13.4 12"><circle cx="6.7" cy="3.1" r="3.1" fill="#eee"/><path d="M0 12V10.4C0 8.2 4.4 7.2 6.7 7.2S13.4 8.2 13.4 10.4V12Z" fill="#eee"/></svg>
</div>
</body>
</html>
